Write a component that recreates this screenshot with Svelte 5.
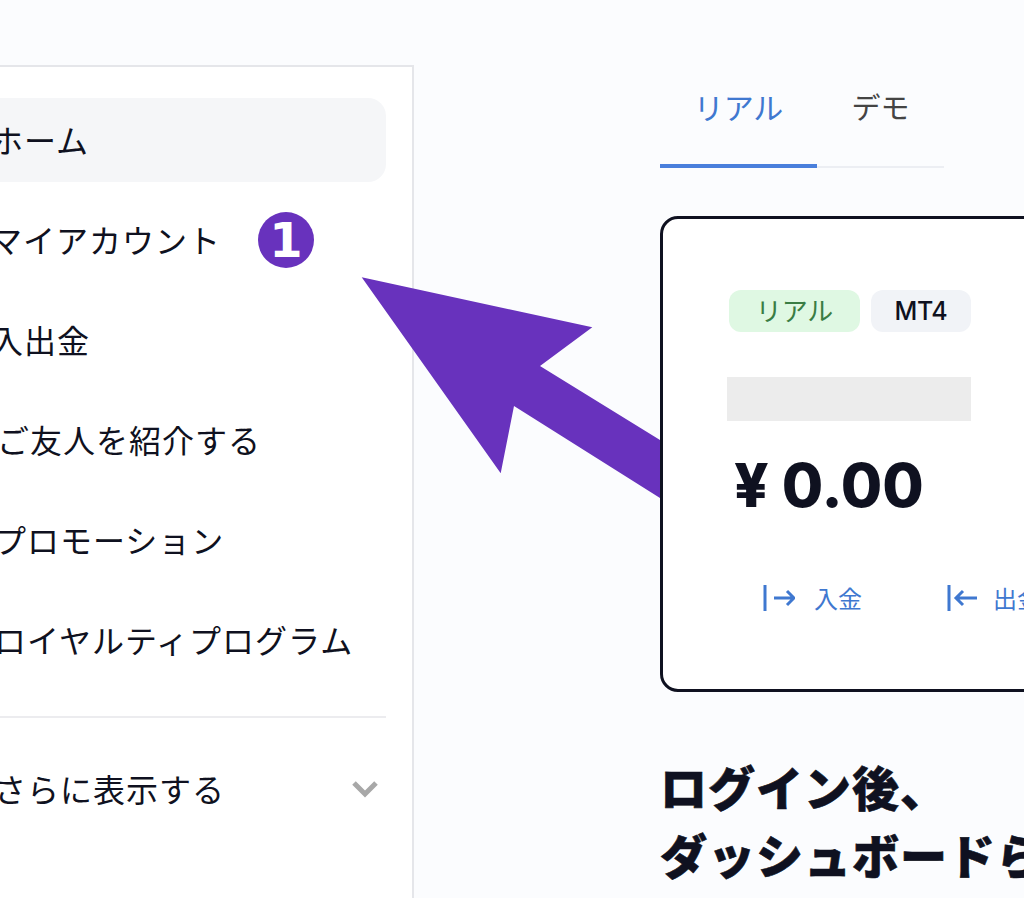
<script>
  // shift: small per-row offset of the label inside the clipped sidebar
  const menu = [
    { label: 'ホーム', active: true, shift: -3 },
    { label: 'マイアカウント', badge: '1', shift: -4 },
    { label: '入出金', shift: -3 },
    { label: 'ご友人を紹介する', shift: 3 },
    { label: 'プロモーション', shift: 0 },
    { label: 'ロイヤルティプログラム', shift: 0 }
  ];
</script>

<div class="page">
  <aside class="sidebar">
    <nav class="menu">
      {#each menu as item}
        <a class="item" class:active={item.active} href="#top">
          <span class="label" style="margin-left: {item.shift}px">{item.label}</span>
          {#if item.badge}
            <span class="badge">{item.badge}</span>
          {/if}
        </a>
      {/each}
    </nav>
    <div class="more">
      <span class="label">さらに表示する</span>
      <svg width="26" height="18" viewBox="0 0 26 18">
        <polyline points="2,3 13,14 24,3" fill="none" stroke="#a8a8a8" stroke-width="5" />
      </svg>
    </div>
  </aside>

  <main class="content">
    <div class="tabs">
      <button class="tab selected">リアル</button>
      <button class="tab">デモ</button>
    </div>

    <section class="card">
      <div class="chips">
        <span class="chip green">リアル</span>
        <span class="chip grey">MT4</span>
      </div>
      <div class="masked"></div>
      <div class="amount">¥ 0.00</div>
      <div class="actions">
        <span class="action">
          <svg width="32" height="28" viewBox="0 0 32 28">
            <path d="M2 1v26M11 14h20M24 7l7 7-7 7" fill="none" stroke="#3f78d0" stroke-width="3" />
          </svg>
          入金
        </span>
        <span class="action">
          <svg width="32" height="28" viewBox="0 0 32 28">
            <path d="M2 1v26M30 14H9M16 7l-7 7 7 7" fill="none" stroke="#3f78d0" stroke-width="3" />
          </svg>
          出金
        </span>
      </div>
    </section>

    <h1>ログイン後、<br />ダッシュボードら</h1>
  </main>

  <svg class="arrow" width="1024" height="898" viewBox="0 0 1024 898">
    <polygon
      points="361.7,277.3 592.3,327.3 540,366 660,440 660,498 514,406 500.7,473.3"
      fill="#6832bd"
    />
  </svg>
</div>

<style>
  :global(body) {
    background: #fbfcfe;
    overflow: hidden;
  }

  .page {
    position: relative;
    display: flex;
    width: 1024px;
    height: 898px;
    overflow: hidden;
    background: #fbfcfe;
    color: #0f1120;
    font-family: "Noto Sans CJK JP", "Noto Sans", sans-serif;
  }

  .sidebar {
    flex: 0 0 454px;
    box-sizing: border-box;
    margin: 65px 0 0 -40px;
    padding: 31px 26px 0 0;
    background: #fff;
    border-top: 2px solid #e5e6ea;
    border-right: 2px solid #e5e6ea;
  }

  .menu {
    display: flex;
    flex-direction: column;
    gap: 16px;
    padding-bottom: 34px;
    border-bottom: 2px solid #ececef;
  }

  .item {
    display: flex;
    align-items: center;
    gap: 37px;
    height: 84px;
    padding-left: 34px;
    border-radius: 0 18px 18px 0;
    color: inherit;
    font-size: 32px;
    text-decoration: none;
  }

  .item.active {
    background: #f5f6f8;
  }

  .label {
    padding-bottom: 3px;
    letter-spacing: 1px;
  }

  .badge {
    display: flex;
    align-items: center;
    justify-content: center;
    width: 56px;
    height: 56px;
    border-radius: 50%;
    background: #6832bd;
    color: #fff;
    font-family: "DejaVu Sans", sans-serif;
    font-size: 48px;
    font-weight: 700;
  }

  .more {
    display: flex;
    align-items: center;
    justify-content: space-between;
    height: 142px;
    padding: 0 8px 0 34px;
    font-size: 32px;
  }

  .content {
    flex: 0 0 auto;
    padding: 0 0 0 246px;
  }

  .tabs {
    display: flex;
    width: 284px;
    height: 103px;
    margin-top: 65px;
    box-shadow: inset 0 -2px 0 #eceef3;
  }

  .tab {
    width: 157px;
    height: 103px;
    padding: 0 0 21px;
    border: 0;
    background: none;
    color: #444;
    font: inherit;
    font-size: 30px;
  }

  .tab + .tab {
    width: 127px;
    font-size: 29px;
  }

  .tab.selected {
    color: #3f78d0;
    box-shadow: inset 0 -4px 0 #4a7fdc;
  }

  .card {
    box-sizing: border-box;
    width: 520px;
    height: 476px;
    margin-top: 48px;
    padding: 71px 0 0 66px;
    background: #fff;
    border: 3px solid #0f1120;
    border-radius: 18px;
  }

  .chips {
    display: flex;
    gap: 11px;
  }

  .chip {
    display: flex;
    align-items: center;
    justify-content: center;
    box-sizing: border-box;
    height: 42px;
    border-radius: 12px;
    font-size: 26px;
  }

  .chip.green {
    width: 131px;
    padding-bottom: 4px;
    background: #dff8e3;
    color: #3a7d44;
  }

  .chip.grey {
    width: 100px;
    background: #f1f3f7;
    font-family: Inter, sans-serif;
    font-size: 25px;
    font-weight: 500;
    letter-spacing: -0.3px;
  }

  .masked {
    width: 244px;
    height: 44px;
    margin: 45px 0 0 -2px;
    background: #ececec;
  }

  .amount {
    margin: 24px 0 0 5px;
    font-family: Inter, sans-serif;
    font-size: 60px;
    font-weight: 800;
    line-height: 80px;
  }

  .actions {
    display: flex;
    gap: 85px;
    margin: 55px 0 0 34px;
  }

  .action {
    display: flex;
    align-items: center;
    gap: 19px;
    color: #3f78d0;
    font-size: 24px;
  }

  .action + .action {
    gap: 14px;
  }

  h1 {
    margin: 60px 0 0;
    font-size: 47px;
    font-weight: 900;
    letter-spacing: 1px;
    line-height: 68px;
    white-space: nowrap;
    -webkit-text-stroke: 0.6px #0f1120;
  }

  .arrow {
    position: absolute;
    top: 0;
    left: 0;
    pointer-events: none;
  }
</style>
